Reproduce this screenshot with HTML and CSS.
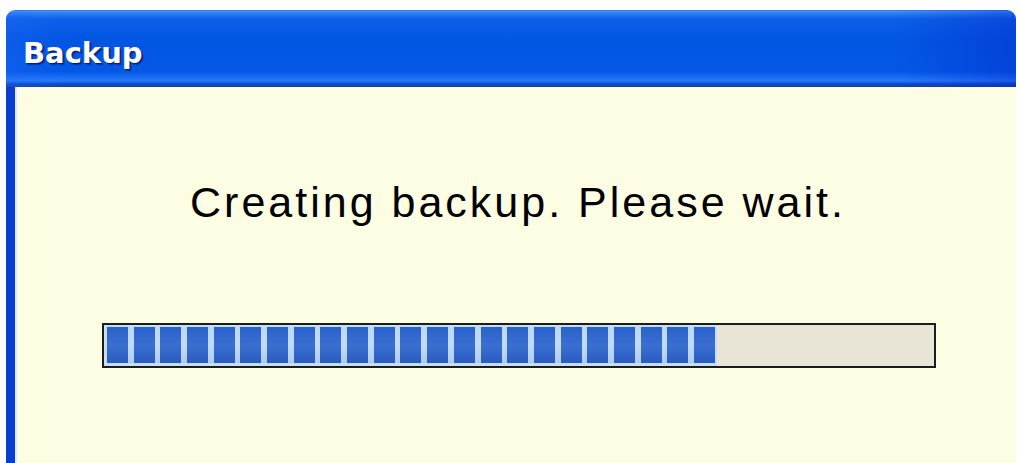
FILE: index.html
```html
<!DOCTYPE html>
<html lang="en">
<head>
<meta charset="utf-8">
<title>Backup</title>
<link rel="stylesheet" href="styles.css">
</head>
<body>
  <div class="window">
    <div class="titlebar">
      <span class="title">Backup</span>
    </div>
    <div class="client">
      <p class="message">Creating backup. Please wait.</p>
      <div class="progress">
        <div class="progress-fill" style="width: 613px"></div>
      </div>
    </div>
  </div>
</body>
</html>
```

FILE: styles.css
```css
html, body {
  margin: 0;
  padding: 0;
  background: #ffffff;
  overflow: hidden;
  width: 1020px;
  height: 463px;
}

.window {
  margin: 10px 0 0 6px;
  width: 1010px;
  display: flex;
  flex-direction: column;
}

/* Luna-style caption bar */
.titlebar {
  height: 77px;
  box-sizing: border-box;
  border-radius: 9px 9px 0 0;
  padding: 8px 0 0 17px;
  display: flex;
  align-items: center;
  background:
    linear-gradient(to right, rgba(40, 110, 255, 0.25) 0, rgba(0, 0, 0, 0) 6%, rgba(0, 0, 0, 0) 88%, rgba(0, 30, 200, 0.35) 100%),
    linear-gradient(to bottom,
      #1c62dc 0px,
      #4a96ff 1px,
      #2f80f6 3px,
      #0c5fe8 9px,
      #0356e2 40%,
      #0458e6 80%,
      #1a6ff6 88%,
      #2a7afa 92%,
      #0a4cd0 96%,
      #1a3fa0 100%);
}

.title {
  font-family: "DejaVu Sans", Tahoma, sans-serif;
  font-weight: bold;
  font-size: 29px;
  color: #ffffff;
  text-shadow: 1px 1px 0 #0a1f70, 2px 2px 1px rgba(10, 30, 110, 0.6);
}

.client {
  height: 376px;
  box-sizing: border-box;
  border-left: 9px solid #0b3dd0;
  box-shadow: inset 2px 0 0 #dfe9f6;
  background: #fcfde2;
  padding: 92px 0 0 87px;
  display: flex;
  flex-direction: column;
}

.message {
  margin: 0 0 0 -87px;
  padding-left: 5px;
  font-family: "Liberation Sans", Arial, sans-serif;
  font-size: 43px;
  letter-spacing: 3px;
  line-height: 46px;
  color: #000000;
  text-align: center;
}

.progress {
  margin-top: 98px;
  width: 834px;
  height: 45px;
  box-sizing: border-box;
  border: 2px solid #1c1c1c;
  background: #e8e5d6;
  display: flex;
}

.progress-fill {
  height: 100%;
  box-sizing: border-box;
  padding: 2px 2px 3px 3px;
  background:
    linear-gradient(to bottom, rgba(255, 255, 255, 0) 0, rgba(255, 255, 255, 0.08) 50%, rgba(0, 0, 0, 0.06) 100%) content-box,
    repeating-linear-gradient(to right, #2a62cc 0, #2a62cc 21px, #bcd9f7 21px, #bcd9f7 26.68px) content-box,
    #c6def8;
}
```
